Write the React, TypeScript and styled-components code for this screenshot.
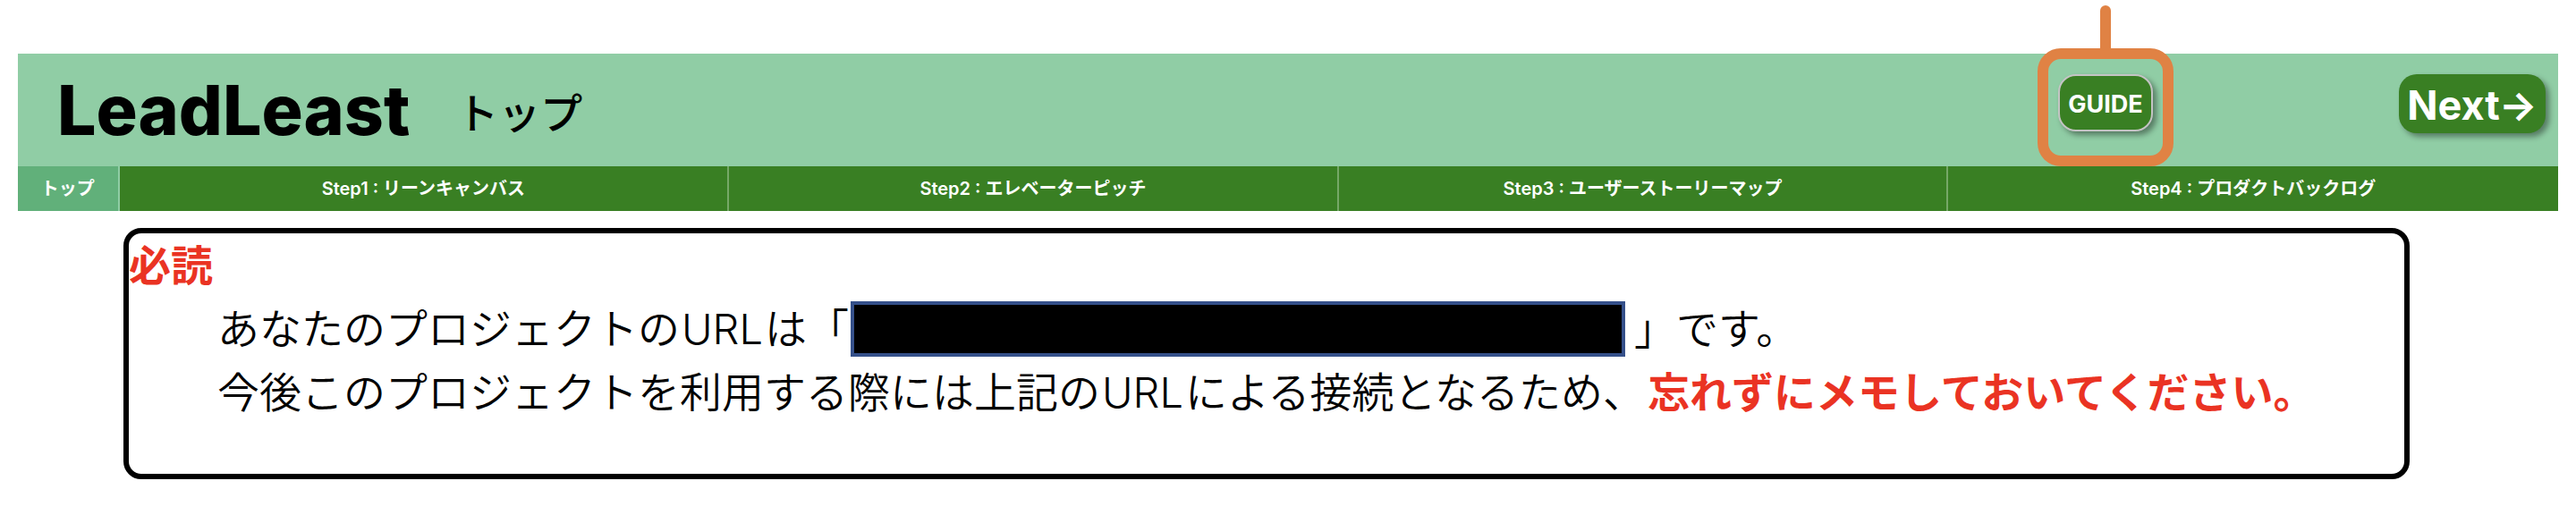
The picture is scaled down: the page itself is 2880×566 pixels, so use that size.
import React from "react";
import styled, { createGlobalStyle } from "styled-components";

const GlobalStyle = createGlobalStyle`
  *, *::before, *::after { box-sizing: border-box; }
  body {
    margin: 0;
    background: #fff;
    color: #000;
    font-family: Inter, "Noto Sans CJK JP", sans-serif;
  }
`;

const Page = styled.div`
  padding: 60px 20px 30px;
`;

const Header = styled.header`
  display: flex;
  align-items: center;
  min-height: 126px;
  padding: 0 14px 0 44px;
  background: #90cda5;
`;

const Brand = styled.h1`
  margin: 0;
  font-size: 77px;
  line-height: 96px;
  font-weight: 800;
`;

const PageName = styled.h2`
  margin: 0 auto 0 52px;
  padding-top: 8px;
  font-size: 47px;
  line-height: 70px;
  font-weight: 500;
`;

const Actions = styled.div`
  display: flex;
  align-items: flex-start;
  gap: 275px;
  margin-bottom: 14px;
`;

const GuideAnchor = styled.div`
  position: relative;
  display: flex;
`;

const Highlight = styled.span`
  position: absolute;
  top: -29px;
  left: -23px;
  right: -23px;
  bottom: -39px;
  border: 12px solid #e08244;
  border-radius: 26px;
  pointer-events: none;

  &::before {
    content: "";
    position: absolute;
    left: 50%;
    bottom: 100%;
    width: 12px;
    height: 60px;
    margin-left: -6px;
    border-radius: 6px 6px 0 0;
    background: #e08244;
  }
`;

const ActionButton = styled.button<{ $large?: boolean }>`
  width: ${(p) => (p.$large ? "164px" : "106px")};
  height: ${(p) => (p.$large ? "66px" : "64px")};
  padding: 4px 0 0;
  border: ${(p) => (p.$large ? "0" : "2px solid #c4c4c4")};
  border-radius: 20px;
  background: #397f23;
  box-shadow: 4px 4px 6px rgba(0, 0, 0, 0.4);
  color: #fff;
  font-family: inherit;
  font-size: ${(p) => (p.$large ? "45px" : "27px")};
  line-height: 56px;
  font-weight: 700;
  white-space: nowrap;
  display: flex;
  align-items: center;
  justify-content: center;
`;

const Steps = styled.nav`
  display: flex;
  min-height: 50px;
  background: #397f23;
`;

const StepLink = styled.a<{ $current?: boolean }>`
  flex: 0 0 ${(p) => (p.$current ? "4%" : "24%")};
  display: flex;
  align-items: center;
  justify-content: center;
  border-right: 2px solid ${(p) => (p.$current ? "#90cda5" : "#76a867")};
  background: ${(p) => (p.$current ? "#61b07a" : "transparent")};
  color: #fff;
  font-size: 20px;
  line-height: 28px;
  font-weight: 600;
  text-decoration: none;

  &:last-child { border-right: 0; }
`;

const Notice = styled.section`
  width: 90%;
  margin: 19px 0 0 118px;
  padding: 0 0 56px;
  border: 6px solid #000;
  border-radius: 20px;
  font-size: 47px;
  line-height: 71px;
`;

const NoticeTitle = styled.h3`
  margin: 0;
  color: #ea3323;
  font-size: inherit;
  font-weight: 700;
`;

const NoticeText = styled.p`
  margin: 0 0 0 99px;
  font-weight: 350;
`;

const Latin = styled.span`
  padding: 0 2px;
`;

const Redacted = styled.span`
  display: inline-block;
  width: 866px;
  height: 62px;
  margin: -8px 10px 0 2px;
  border: 4px solid #35508a;
  background: #000;
  vertical-align: -14px;
`;

const Warning = styled.strong`
  margin-left: 3px;
  color: #ea3323;
  font-weight: 700;
`;

const steps = [
  "Step1 : リーンキャンバス",
  "Step2 : エレベーターピッチ",
  "Step3 : ユーザーストーリーマップ",
  "Step4 : プロダクトバックログ",
];

export default function App() {
  return (
    <Page lang="ja">
      <GlobalStyle />
      <Header>
        <Brand>LeadLeast</Brand>
        <PageName>トップ</PageName>
        <Actions>
          <GuideAnchor>
            <ActionButton type="button">GUIDE</ActionButton>
            <Highlight aria-hidden="true" />
          </GuideAnchor>
          <ActionButton type="button" $large>Next→</ActionButton>
        </Actions>
      </Header>
      <Steps>
        <StepLink href="#top" $current aria-current="page">トップ</StepLink>
        {steps.map((label, i) => (
          <StepLink key={label} href={`#step${i + 1}`}>{label}</StepLink>
        ))}
      </Steps>
      <main>
        <Notice>
          <NoticeTitle>必読</NoticeTitle>
          <NoticeText>
            あなたのプロジェクトの<Latin>URL</Latin>は「<Redacted />」です。
          </NoticeText>
          <NoticeText>
            今後このプロジェクトを利用する際には上記の<Latin>URL</Latin>による接続となるため、<Warning>忘れずにメモしておいてください。</Warning>
          </NoticeText>
        </Notice>
      </main>
    </Page>
  );
}
